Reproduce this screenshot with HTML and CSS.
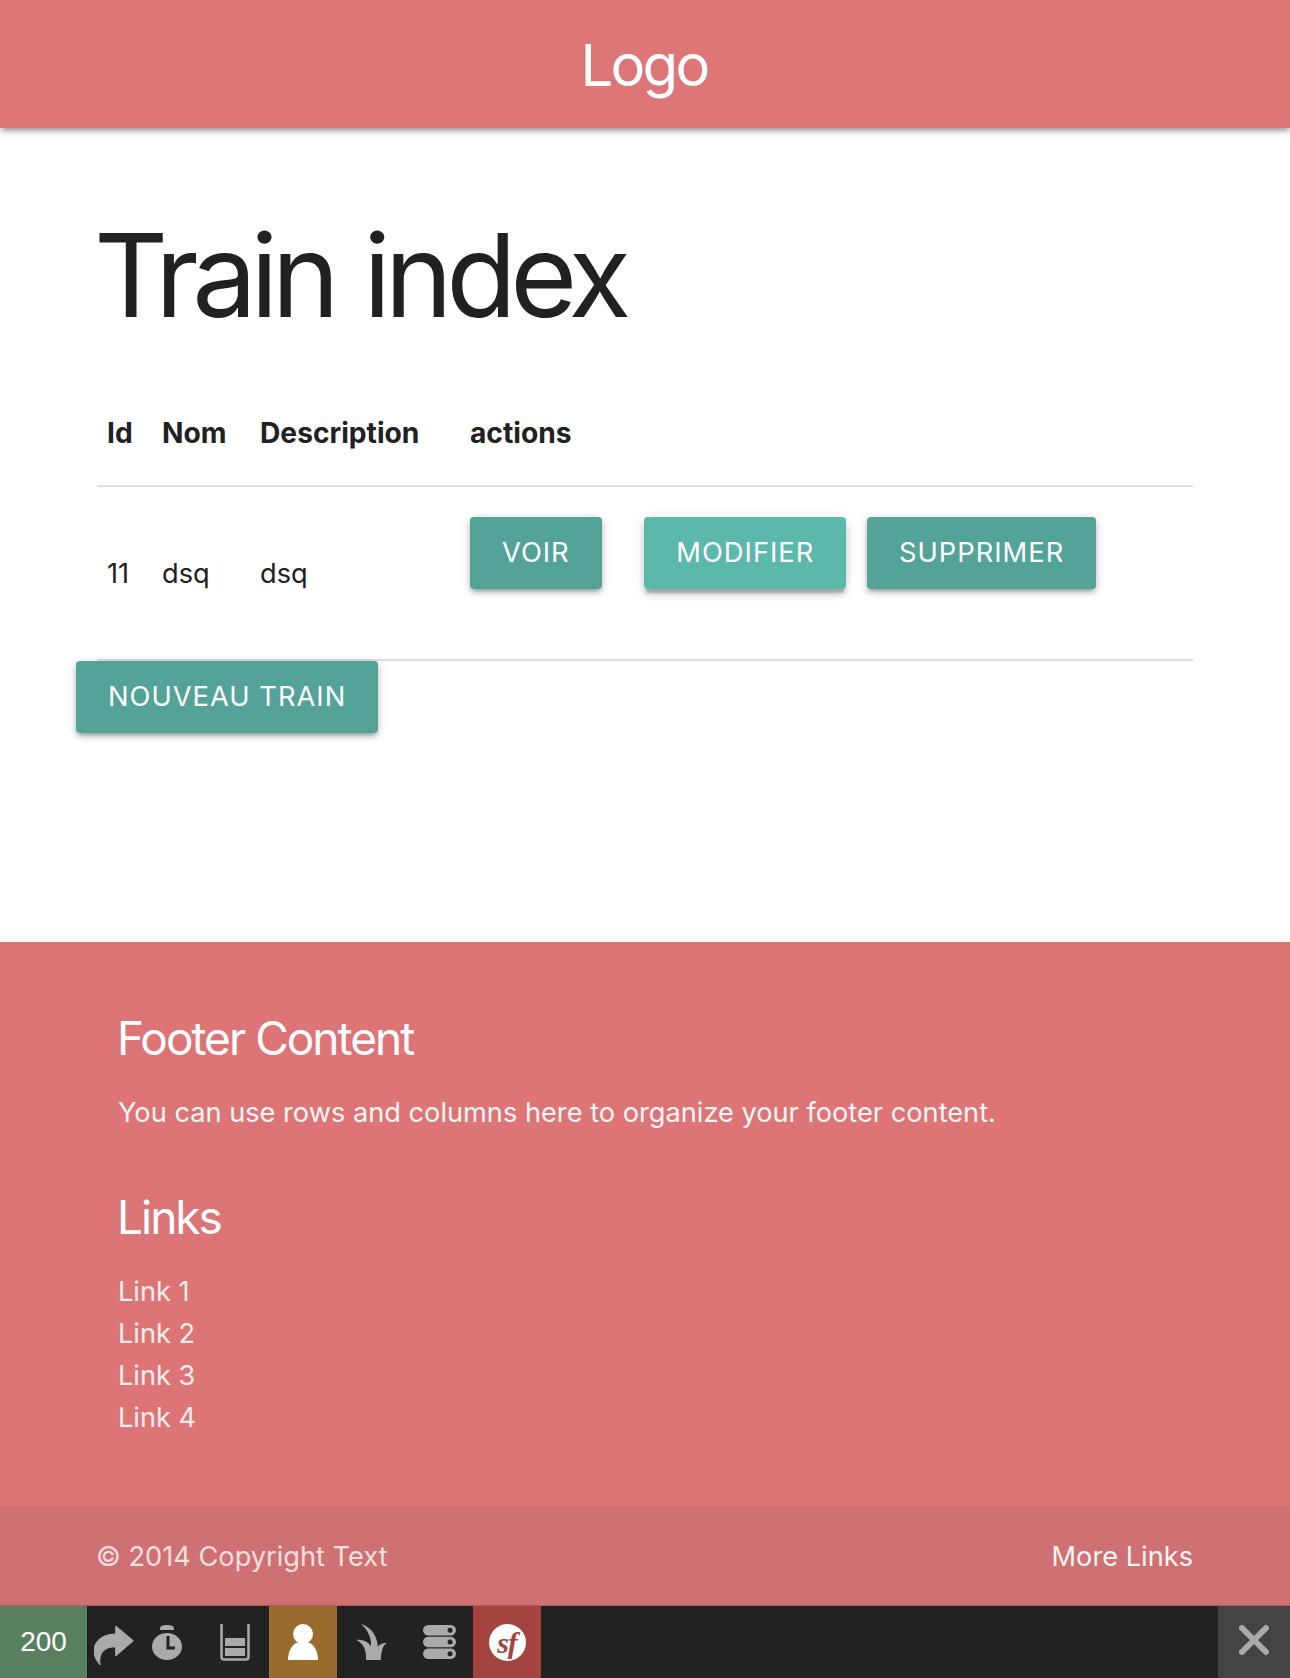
FILE: index.html
```html
<!DOCTYPE html>
<html>
<head>
	<title>Train index</title>
	<meta charset="utf8"/>
	<link rel="stylesheet" href="styles.css">
</head>
<body>
	<nav class="topbar"><a class="logo">Logo</a></nav>
	<main class="container">
		<h1>Train index</h1>
		<table>
			<colgroup>
				<col class="col-id">
				<col class="col-nom">
				<col class="col-desc">
				<col>
			</colgroup>
			<thead>
				<tr>
					<th>Id</th>
					<th>Nom</th>
					<th>Description</th>
					<th>actions</th>
				</tr>
			</thead>
			<tbody>
				<tr>
					<td>11</td>
					<td>dsq</td>
					<td>dsq</td>
					<td class="actions">
						<a class="btn btn-first">voir</a>
						<a class="btn btn-hover">modifier</a>
						<a class="btn">supprimer</a>
					</td>
				</tr>
			</tbody>
		</table>
		<a class="btn btn-new">nouveau train</a>
	</main>
	<footer>
		<div class="footer-content">
			<h5>Footer Content</h5>
			<p>You can use rows and columns here to organize your footer content.</p>
			<h5>Links</h5>
			<ul>
				<li>Link 1</li>
				<li>Link 2</li>
				<li>Link 3</li>
				<li>Link 4</li>
			</ul>
		</div>
		<div class="copyright">
			<span>© 2014 Copyright Text</span>
			<span class="more">More Links</span>
		</div>
	</footer>
	<div class="toolbar">
		<div class="tb-item tb-status">200</div>
		<div class="tb-item tb-redirect">
			<svg width="40" height="39" viewBox="0 0 40 39"><path d="M21.700 0 L39.300 14.700 L21.700 30 V21 C12 20 4 26 6 39 C2 34 0 30 0 25 C0 14 10 8 21.700 8 Z" fill="#aaa" stroke="#aaa" stroke-linejoin="round"/></svg>
		</div>
		<div class="tb-item tb-time">
			<svg width="30" height="35" viewBox="0 0 30 35"><path d="M8 3.500 C8 1 11 0 15 0 C19 0 22 1 22 3.500 V5 H8 Z" fill="#aaa"/><ellipse cx="15" cy="21.500" rx="15" ry="13.500" fill="#aaa"/><path d="M16 11 V23 H23" fill="none" stroke="#222" stroke-width="3"/></svg>
		</div>
		<div class="tb-item tb-memory">
			<svg width="30" height="37" viewBox="0 0 30 37"><path d="M1.500 0 V33 Q1.500 35.500 4 35.500 H26 Q28.500 35.500 28.500 33 V0" fill="none" stroke="#aaa" stroke-width="2.500"/><rect x="5" y="14" width="20" height="8" fill="#aaa"/><rect x="5" y="24" width="20" height="8" fill="#aaa"/></svg>
		</div>
		<div class="tb-item tb-user">
			<svg width="30" height="36" viewBox="0 0 30 36"><circle cx="15" cy="10" r="10" fill="#fff"/><path d="M0 36 C0 26 5 19 11 18 H19 C25 19 30 26 30 36 Z" fill="#fff"/></svg>
		</div>
		<div class="tb-item tb-twig">
			<svg width="31" height="36" viewBox="0 0 31 36"><path d="M5 0 C15 3 21 11 22 23 C23 21 25 19 31 19 C27 21 25.500 26 24.700 36 H10 C10.500 27 8 19 0 16 C6 15 11 17 15 22 C15.500 13 11 5 5 0 Z" fill="#aaa"/></svg>
		</div>
		<div class="tb-item tb-db">
			<svg width="33" height="34" viewBox="0 0 33 34"><g fill="#aaa"><rect width="33" height="10.500" rx="5.250"/><rect y="11.750" width="33" height="10.500" rx="5.250"/><rect y="23.500" width="33" height="10.500" rx="5.250"/></g><g fill="#222"><circle cx="27" cy="5.250" r="2.500"/><circle cx="27" cy="17" r="2.500"/><circle cx="27" cy="28.750" r="2.500"/></g></svg>
		</div>
		<div class="tb-item tb-sf"><span class="sf-logo">sf</span></div>
		<div class="tb-spacer"></div>
		<div class="tb-item tb-close">
			<svg width="30" height="30" viewBox="0 0 30 30"><path d="M3 3 L27 27 M27 3 L3 27" stroke="#aaa" stroke-width="6" stroke-linecap="round"/></svg>
		</div>
	</div>
</body>
</html>
```

FILE: styles.css
```css
html, body {
	margin: 0;
	padding: 0;
}

body {
	font-family: Inter, "Liberation Sans", sans-serif;
	font-size: 27.200px;
	color: #212121;
	background: #fff;
}

.topbar {
	height: 128px;
	background: #de7678;
	box-shadow: 0 4px 4px 0 rgba(0,0,0,.14), 0 6px 2px -4px rgba(0,0,0,.12), 0 2px 10px 0 rgba(0,0,0,.2);
	display: flex;
	align-items: center;
	justify-content: center;
	padding: 2px 2px 0 0;
	box-sizing: border-box;
}

.logo {
	color: #fff;
	font-size: 58px;
	letter-spacing: -2.700px;
}

.container {
	margin: 0 97px;
	height: 814px;
}

h1 {
	margin: 0 0 0 -3px;
	padding-top: 80px;
	font-size: 115px;
	font-weight: 400;
	letter-spacing: -6.400px;
	word-spacing: 4px;
	line-height: 136px;
}

table {
	width: 100%;
	border-collapse: collapse;
	table-layout: fixed;
	margin-top: 36px;
}

.col-id { width: 55px; }
.col-nom { width: 98px; }
.col-desc { width: 210px; }

th, td {
	padding: 0 0 0 10px;
	text-align: left;
	border-bottom: 2px solid #e0e0e0;
}

th {
	font-size: 28.200px;
	font-weight: 700;
	height: 105px;
}

td {
	height: 172px;
}

td.actions {
	height: auto;
	vertical-align: top;
	padding-top: 30px;
	white-space: nowrap;
}

.btn {
	display: inline-block;
	height: 72px;
	line-height: 72px;
	padding: 0 32px;
	background: #53a399;
	color: #fff;
	font-size: 27.300px;
	letter-spacing: 1px;
	text-transform: uppercase;
	border-radius: 4px;
	box-shadow: 0 4px 4px 0 rgba(0,0,0,.14), 0 6px 2px -4px rgba(0,0,0,.12), 0 2px 10px 0 rgba(0,0,0,.2);
}

.btn-first {
	margin-right: 35px;
}

.btn-hover {
	background: #5db8ac;
	margin-right: 13px;
	box-shadow: 0 6px 6px 0 rgba(0,0,0,.14), 0 2px 14px 0 rgba(0,0,0,.12), 0 6px 2px -2px rgba(0,0,0,.2);
}

.btn-new {
	margin-left: -21px;
}

footer {
	background: #dd7577;
	color: #fff;
}

.footer-content {
	padding: 66px 118px 0;
	height: 498px;
}

h5 {
	margin: 0 0 0 -1px;
	font-size: 46px;
	font-weight: 400;
	line-height: 60px;
	letter-spacing: -2px;
}

.footer-content p {
	margin: 24px 0 53px;
	line-height: 42px;
	color: #f5f5f5;
}

ul {
	list-style: none;
	margin: 24px 0 0;
	padding: 0;
	color: #eee;
}

li {
	line-height: 42px;
}

.copyright {
	height: 100px;
	padding: 0 97px;
	background: #cf7072;
	display: flex;
	align-items: center;
	justify-content: space-between;
	color: rgba(255,255,255,.8);
}

.copyright span:first-child {
	margin-left: -1px;
}

.more {
	color: #f5f5f5;
}

.toolbar {
	height: 72px;
	background: #222;
	display: flex;
	align-items: stretch;
	box-shadow: 0 -1px 1px rgba(0,0,0,.15);
}

.tb-item {
	display: flex;
	align-items: center;
	justify-content: center;
	box-sizing: border-box;
	width: 68px;
}

.tb-status {
	width: 87px;
	background: #59805f;
	color: #fff;
	font-size: 28px;
	font-family: "Liberation Sans", sans-serif;
}

.tb-redirect { width: 50px; padding: 7px 0 0 3px; }
.tb-time { width: 60px; }
.tb-memory { width: 72px; padding-left: 4px; }
.tb-user { background: #996b2f; }
.tb-sf { background: #a3443f; }
.tb-spacer { flex: 1; }
.tb-close { width: 72px; background: #444; padding-bottom: 4px; }

.sf-logo {
	width: 37px;
	height: 37px;
	border-radius: 50%;
	background: #fff;
	color: #a3443f;
	font: italic 700 30px/37px "Liberation Serif", serif;
	letter-spacing: -1px;
	text-align: center;
}
```
